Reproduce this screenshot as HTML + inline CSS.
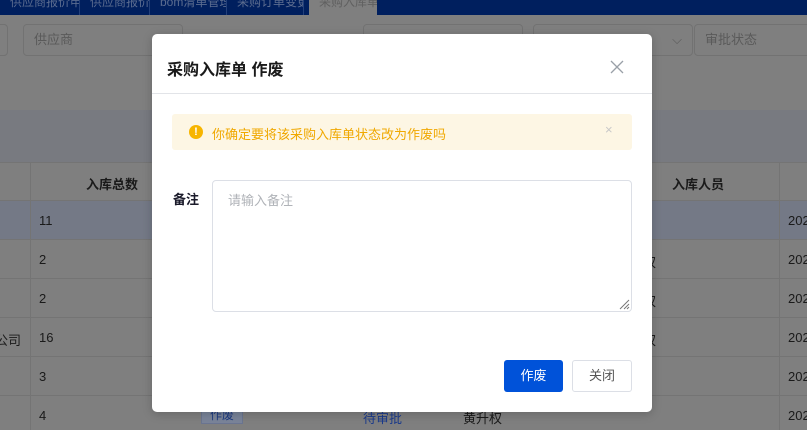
<!DOCTYPE html>
<html><head><meta charset="utf-8"><style>
*{margin:0;padding:0;box-sizing:border-box}
body{width:807px;height:430px;overflow:hidden;position:relative;background:#7f7f7f;font-family:"Liberation Sans","Noto Sans CJK SC",sans-serif;font-size:13px;color:#111}
.a{position:absolute}
.top{left:0;top:0;width:807px;height:15px;background:#001f5e;overflow:hidden}
.tab{top:-7px;height:22px;color:#5b6c8f;font-size:12px;line-height:18px;border-right:1px solid #23407a;padding-left:10px;white-space:nowrap;overflow:hidden}
.inp{top:24px;height:32px;border:1px solid #727272;border-radius:4px;color:#5a5a5a;padding-left:10px;line-height:30px;font-size:13px;white-space:nowrap}
.row{left:0;width:807px;height:39px;border-bottom:1px solid #747474}
.cell{font-size:13px;color:#1a1a1a;white-space:nowrap}
.vl{top:162px;width:1px;height:268px;background:#747474}
</style></head><body>
<div class="a top">
<div class="a tab" style="left:0;width:80px">供应商报价申请 ✕</div>
<div class="a tab" style="left:80px;width:70px">供应商报价 ✕</div>
<div class="a tab" style="left:150px;width:77px">bom清单管理 ✕</div>
<div class="a tab" style="left:227px;width:77px">采购订单变更 ✕</div>
<div class="a tab" style="left:309px;width:68px;top:0;height:15px;background:#7f7f7f;color:#606060;border:none;line-height:4px">采购入库单 ✕</div>
</div>
<div class="a inp" style="left:-10px;width:18px"></div>
<div class="a inp" style="left:23px;width:160px">供应商</div>
<div class="a inp" style="left:363px;width:160px"></div>
<div class="a inp" style="left:533px;width:160px;text-align:right;padding-right:10px">⌵</div>
<div class="a inp" style="left:694px;width:120px">审批状态</div>
<div class="a" style="left:0;top:110px;width:807px;height:52px;background:#787a80"></div>
<div class="a row" style="top:162px;background:#7f7f7f;border-top:1px solid #747474"></div>
<div class="a row" style="top:201px;background:#747986"></div>
<div class="a row" style="top:240px"></div>
<div class="a row" style="top:279px"></div>
<div class="a row" style="top:318px"></div>
<div class="a row" style="top:357px"></div>
<div class="a vl" style="left:30px"></div>
<div class="a vl" style="left:779px"></div>
<div class="a cell" style="left:86px;top:174px;font-weight:bold">入库总数</div>
<div class="a cell" style="left:672px;top:174px;font-weight:bold">入库人员</div>
<div class="a cell" style="left:39px;top:213px">11</div>
<div class="a cell" style="left:39px;top:252px">2</div>
<div class="a cell" style="left:39px;top:291px">2</div>
<div class="a cell" style="left:39px;top:330px">16</div>
<div class="a cell" style="left:-5px;top:330px">公司</div>
<div class="a cell" style="left:39px;top:369px">3</div>
<div class="a cell" style="left:39px;top:408px">4</div>
<div class="a cell" style="left:643px;top:252px">权</div>
<div class="a cell" style="left:643px;top:291px">权</div>
<div class="a cell" style="left:643px;top:330px">权</div>
<div class="a cell" style="left:788px;top:213px">202</div>
<div class="a cell" style="left:788px;top:252px">202</div>
<div class="a cell" style="left:788px;top:291px">202</div>
<div class="a cell" style="left:788px;top:330px">202</div>
<div class="a cell" style="left:788px;top:369px">202</div>
<div class="a cell" style="left:788px;top:408px">202</div>
<div class="a" style="left:201px;top:406px;width:42px;height:18px;background:#7a8499;border:1px solid #6a7590;color:#1c3a80;font-size:12px;text-align:center;line-height:16px">作废</div>
<div class="a cell" style="left:363px;top:408px;color:#1a3a8c">待审批</div>
<div class="a cell" style="left:463px;top:408px">黄升权</div>

<div class="a" style="left:152px;top:34px;width:500px;height:378px;background:#fff;border-radius:5px;box-shadow:0 2px 10px rgba(0,0,0,.2)">
  <div class="a" style="left:15px;top:22px;font-size:16px;font-weight:bold;color:#1a1a1a">采购入库单 作废</div>
  <div class="a" style="left:456px;top:24px;width:18px;height:18px">
    <svg width="18" height="18"><path d="M3 3L15 15M15 3L3 15" stroke="#9aa0a8" stroke-width="1.3"/></svg>
  </div>
  <div class="a" style="left:0;top:59px;width:500px;height:1px;background:#e2e4e8"></div>
  <div class="a" style="left:20px;top:80px;width:460px;height:36px;background:#fdf6e4;border-radius:3px">
    <div class="a" style="left:17px;top:11px;width:14px;height:14px;border-radius:50%;background:#f7b500;color:#fff;font-size:11px;font-weight:bold;text-align:center;line-height:14px">!</div>
    <div class="a" style="left:40px;top:10px;color:#f0a800;font-size:13px">你确定要将该采购入库单状态改为作废吗</div>
    <div class="a" style="left:433px;top:8px;color:#c8c8c8;font-size:13px">×</div>
  </div>
  <div class="a" style="left:21px;top:155px;font-weight:bold;color:#1a1a2a;font-size:13px">备注</div>
  <div class="a" style="left:60px;top:146px;width:420px;height:132px;border:1px solid #dcdfe6;border-radius:4px">
    <div class="a" style="left:15px;top:9px;color:#b0b3b8;font-size:13px">请输入备注</div>
    <svg class="a" style="right:1px;bottom:1px" width="12" height="12"><path d="M11 2L2 11M11 6L6 11M11 9L9 11" stroke="#777" stroke-width="1"/></svg>
  </div>
  <div class="a" style="left:352px;top:326px;width:59px;height:32px;background:#0052d9;border-radius:3px;color:#fff;text-align:center;line-height:32px;font-size:13px">作废</div>
  <div class="a" style="left:420px;top:326px;width:60px;height:32px;border:1px solid #dcdfe6;border-radius:3px;color:#555;text-align:center;line-height:30px;font-size:13px">关闭</div>
</div>
</body></html>
